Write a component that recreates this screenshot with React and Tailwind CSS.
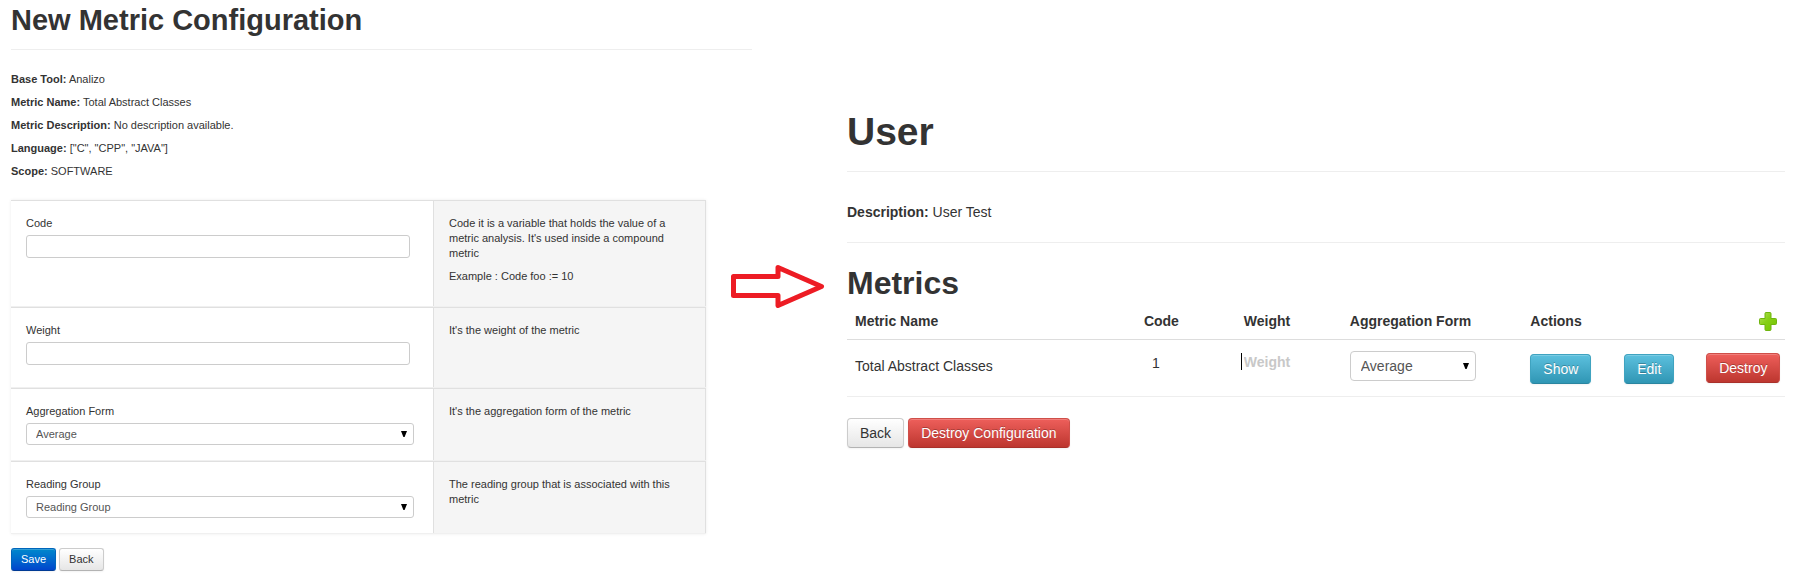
import React from "react";

const smallButton =
  "h-[23px] rounded-[3px] border px-[9px] text-[11px] leading-[15px] shadow-[inset_0_1px_0_rgba(255,255,255,0.2),0_1px_2px_rgba(0,0,0,0.05)]";
const button =
  "h-[30px] rounded-[4px] border px-[12px] text-[14px] leading-[20px] shadow-[inset_0_1px_0_rgba(255,255,255,0.2),0_1px_2px_rgba(0,0,0,0.05)]";
const plain =
  "border-[#cccccc] border-b-[#b3b3b3] bg-linear-to-b from-white to-[#e6e6e6] text-[#333333]";
const primary =
  "border-[#0066bb] border-b-[#003a94] bg-linear-to-b from-[#0088cc] to-[#0044cc] text-white";
const info =
  "border-[#3fa3c0] border-b-[#2a85a0] bg-linear-to-b from-[#5bc0de] to-[#2f96b4] text-white [text-shadow:0_-1px_0_rgba(0,0,0,0.25)]";
const danger =
  "border-[#cf4f49] border-b-[#a9302a] bg-linear-to-b from-[#ee5f5b] to-[#bd362f] text-white [text-shadow:0_-1px_0_rgba(0,0,0,0.25)]";

function Caret({ className }) {
  return (
    <svg viewBox="0 0 6 6" className={className} aria-hidden="true">
      <path d="M0 0H6L3.6 6H2.4Z" fill="#000" />
    </svg>
  );
}

function Detail({ label, children }) {
  return (
    <p>
      <strong>{label}:</strong> {children}
    </p>
  );
}

function FieldRow({ id, label, help, children }) {
  return (
    <div className="grid grid-cols-[422fr_273fr] border-t border-t-[#e0e0e0] border-b border-b-[#f0f0f0]">
      <div className="flex flex-col pt-[15px] pr-[19px] pb-[15px] pl-[15px]">
        <label htmlFor={id} className="mb-1">
          {label}
        </label>
        {children}
      </div>
      <div className="border-x border-[#e0e0e0] bg-[#f5f5f5] p-[15px]">{help}</div>
    </div>
  );
}

function TextField({ id }) {
  return (
    <input
      id={id}
      type="text"
      className="mr-1 mb-[7px] h-[23px] rounded-[3px] border border-[#cccccc] bg-white px-2"
    />
  );
}

function SelectField({ id, option }) {
  return (
    <div className="relative flex">
      <select
        id={id}
        className="h-[22px] w-full appearance-none rounded-[3px] border border-[#cccccc] bg-white px-[9px] text-[#555555]"
      >
        <option>{option}</option>
      </select>
      <Caret className="pointer-events-none absolute top-2 right-[7px] size-[6px]" />
    </div>
  );
}

function NewMetric() {
  return (
    <section className="text-[11px] leading-[15px]">
      <h1 className="text-[29px] leading-[40px] font-bold">New Metric Configuration</h1>
      <hr className="mt-[9px] mr-[95px] border-[#eeeeee]" />
      <div className="mt-[22px] space-y-2">
        <Detail label="Base Tool">Analizo</Detail>
        <Detail label="Metric Name">Total Abstract Classes</Detail>
        <Detail label="Metric Description">No description available.</Detail>
        <Detail label="Language">["C", "CPP", "JAVA"]</Detail>
        <Detail label="Scope">SOFTWARE</Detail>
      </div>
      <div className="mt-[21px] flex items-start">
        <form className="flex-1" onSubmit={(e) => e.preventDefault()}>
          <div className="shadow-[0_0_3px_rgba(0,0,0,0.08)]">
            <FieldRow
              id="code"
              label="Code"
              help={
                <>
                  <p className="mb-2">
                    Code it is a variable that holds the value of a metric analysis. It's used
                    inside a compound metric
                  </p>
                  <p className="mb-[7px]">Example : Code foo := 10</p>
                </>
              }
            >
              <TextField id="code" />
            </FieldRow>
            <FieldRow id="weight" label="Weight" help="It's the weight of the metric">
              <TextField id="weight" />
            </FieldRow>
            <FieldRow
              id="aggregation"
              label="Aggregation Form"
              help="It's the aggregation form of the metric"
            >
              <SelectField id="aggregation" option="Average" />
            </FieldRow>
            <FieldRow
              id="reading-group"
              label="Reading Group"
              help="The reading group that is associated with this metric"
            >
              <SelectField id="reading-group" option="Reading Group" />
            </FieldRow>
          </div>
          <div className="mt-[14px] flex gap-[3px]">
            <button type="submit" className={`${smallButton} ${primary}`}>
              Save
            </button>
            <button type="button" className={`${smallButton} ${plain}`}>
              Back
            </button>
          </div>
        </form>
        <svg
          viewBox="0 0 94 44"
          className="mt-[64px] mr-[22px] ml-[25px] h-[44px] w-[94px]"
          aria-hidden="true"
        >
          <path
            d="M2.5 12.500H47V3.500L90.500 22.500L47 41.500V31.500H2.500Z"
            fill="#fff"
            stroke="#ed1c24"
            strokeWidth="5"
            strokeLinejoin="round"
          />
        </svg>
      </div>
    </section>
  );
}

function PlusIcon() {
  return (
    <svg viewBox="0 0 18 19" className="h-[19px] w-[18px]" aria-hidden="true">
      <defs>
        <linearGradient id="plus" x1="0" y1="0" x2="1" y2="1">
          <stop offset="0" stopColor="#b4e05c" />
          <stop offset="0.45" stopColor="#86d016" />
          <stop offset="1" stopColor="#74c400" />
        </linearGradient>
      </defs>
      <path
        d="M7 .5H11Q12 .5 12 1.500V6.500H16.500Q17.500 6.500 17.500 7.500V11.500Q17.500 12.500 16.500 12.500H12V17.500Q12 18.500 11 18.500H7Q6 18.500 6 17.500V12.500H1.500Q.5 12.500 .5 11.500V7.500Q.5 6.500 1.500 6.500H6V1.500Q6 .5 7 .5Z"
        fill="url(#plus)"
        stroke="#6fb50f"
      />
    </svg>
  );
}

function UserConfiguration() {
  return (
    <section className="pt-[112px] text-[14px] leading-[20px]">
      <h1 className="text-[39px] leading-[40px] font-bold">User</h1>
      <hr className="mt-[19px] border-[#eeeeee]" />
      <p className="mt-[30px]">
        <strong>Description:</strong> User Test
      </p>
      <hr className="mt-5 border-[#eeeeee]" />
      <h2 className="mt-5 text-[32px] leading-[40px] font-bold">Metrics</h2>
      <table className="w-full table-fixed text-left">
        <colgroup>
          <col className="w-[30.8%]" />
          <col className="w-[10.65%]" />
          <col className="w-[11.3%]" />
          <col className="w-[19.25%]" />
          <col className="w-[10%]" />
          <col className="w-[8.75%]" />
          <col className="w-[9.25%]" />
        </colgroup>
        <thead>
          <tr className="align-bottom [&>th]:px-2 [&>th]:pt-2 [&>th]:pb-2">
            <th>Metric Name</th>
            <th>Code</th>
            <th>Weight</th>
            <th>Aggregation Form</th>
            <th colSpan={2}>Actions</th>
            <th>
              <a href="#new" aria-label="New metric" className="flex h-5 items-center justify-end">
                <PlusIcon />
              </a>
            </th>
          </tr>
        </thead>
        <tbody>
          <tr className="h-[57px] border-t border-b border-t-[#dddddd] border-b-[#eeeeee] align-top [&>td]:px-2">
            <td className="pt-4">Total Abstract Classes</td>
            <td className="pt-[13px]">
              <span className="pl-2">1</span>
            </td>
            <td className="pt-[13px]">
              <input
                type="text"
                aria-label="Weight"
                placeholder="Weight"
                className="-ml-[3px] block h-[17px] w-full border-l border-black pl-[2px] font-bold placeholder:text-[#c8c8c8]"
              />
            </td>
            <td className="pt-[11px]">
              <div className="relative flex w-[126px]">
                <select
                  aria-label="Aggregation Form"
                  className="h-[30px] w-full appearance-none rounded-[4px] border border-[#cccccc] bg-white px-[10px] text-[#555555]"
                >
                  <option>Average</option>
                </select>
                <Caret className="pointer-events-none absolute top-3 right-[7px] size-[6px]" />
              </div>
            </td>
            <td className="pt-[14px]">
              <button type="button" className={`${button} ${info}`}>
                Show
              </button>
            </td>
            <td className="pt-[14px]">
              <button type="button" className={`${button} ${info}`}>
                Edit
              </button>
            </td>
            <td className="pt-[13px]">
              <button type="button" className={`${button} ${danger}`}>
                Destroy
              </button>
            </td>
          </tr>
        </tbody>
      </table>
      <div className="mt-[21px] flex gap-1">
        <button type="button" className={`${button} ${plain}`}>
          Back
        </button>
        <button type="button" className={`${button} ${danger}`}>
          Destroy Configuration
        </button>
      </div>
    </section>
  );
}

export default function App() {
  return (
    <main className="grid min-h-screen grid-cols-[836fr_938fr] bg-white pr-[21px] pl-[11px] font-['Liberation_Sans',Arial,sans-serif] text-[#333333]">
      <NewMetric />
      <UserConfiguration />
    </main>
  );
}
